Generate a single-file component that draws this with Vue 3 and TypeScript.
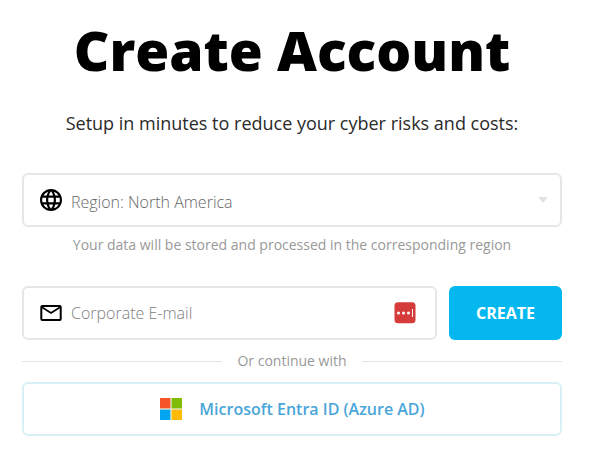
<script setup lang="ts">
import { ref } from 'vue'

const region = ref('North America')
const email = ref('')
</script>

<template>
  <main class="signup">
    <h1 class="title">Create Account</h1>
    <p class="subtitle">Setup in minutes to reduce your cyber risks and costs:</p>

    <div class="field region">
      <svg class="field-icon" viewBox="2 2 20 20" fill="currentColor" aria-hidden="true">
        <path d="M11.99 2C6.47 2 2 6.48 2 12s4.47 10 9.99 10C17.52 22 22 17.52 22 12S17.52 2 11.99 2zm6.93 6h-2.95c-.32-1.25-.78-2.45-1.38-3.56 1.84.63 3.37 1.91 4.33 3.56zM12 4.04c.83 1.2 1.48 2.53 1.91 3.96h-3.82c.43-1.43 1.08-2.76 1.91-3.96zM4.26 14C4.1 13.36 4 12.69 4 12s.1-1.36.26-2h3.38c-.08.66-.14 1.32-.14 2s.06 1.34.14 2H4.26zm.82 2h2.95c.32 1.25.78 2.45 1.38 3.56-1.84-.63-3.37-1.9-4.33-3.56zm2.95-8H5.08c.96-1.66 2.49-2.93 4.33-3.56C8.81 5.55 8.35 6.75 8.03 8zM12 19.96c-.83-1.2-1.48-2.53-1.91-3.96h3.82c-.43 1.43-1.08 2.76-1.91 3.96zM14.34 14H9.66c-.09-.66-.16-1.32-.16-2s.07-1.35.16-2h4.68c.09.65.16 1.32.16 2s-.07 1.34-.16 2zm.25 5.56c.6-1.11 1.06-2.31 1.38-3.56h2.95c-.96 1.65-2.49 2.93-4.33 3.56zM16.36 14c.08-.66.14-1.32.14-2s-.06-1.34-.14-2h3.38c.16.64.26 1.31.26 2s-.1 1.36-.26 2h-3.38z" />
      </svg>
      <span class="region-text">Region: {{ region }}</span>
      <svg class="caret" viewBox="0 0 10 6" aria-hidden="true"><path d="M0 0h10L5 6z" /></svg>
    </div>
    <p class="hint">Your data will be stored and processed in the corresponding region</p>

    <form class="email-row" @submit.prevent>
      <label class="field email">
        <svg class="field-icon mail" viewBox="0 0 22 16" fill="none" stroke="currentColor" stroke-width="2" aria-hidden="true">
          <rect x="1.300" y="1" width="19.400" height="14" rx="1" />
          <path d="M2 2.200 11 8l9-5.800" stroke-width="1.700" />
        </svg>
        <input v-model="email" class="email-input" type="email" placeholder="Corporate E-mail" />
        <svg class="manager" viewBox="0 0 22 22" aria-hidden="true">
          <rect x=".5" y=".2" width="21" height="21" rx="3.500" fill="#d63b3b" />
          <circle cx="4.500" cy="11" r="1.500" fill="#fff" />
          <circle cx="9.500" cy="11" r="1.500" fill="#fff" />
          <circle cx="14.500" cy="11" r="1.500" fill="#fff" />
          <rect x="18" y="7" width="1" height="8" fill="#fff" />
        </svg>
      </label>
      <button class="create" type="submit"><span>CREATE</span></button>
    </form>

    <div class="divider"><span>Or continue with</span></div>

    <button class="microsoft" type="button">
      <svg class="ms-logo" viewBox="0 0 22 22" aria-hidden="true">
        <rect width="22" height="22" fill="#e9efdc" />
        <path fill="#f65326" d="M0 0h10.400v10.400H0z" />
        <path fill="#80bb07" d="M11.600 0H22v10.400H11.600z" />
        <path fill="#04a5f0" d="M0 11.600h10.400V22H0z" />
        <path fill="#ffba08" d="M11.600 11.600H22V22H11.600z" />
      </svg>
      <span>Microsoft Entra ID (Azure AD)</span>
    </button>
  </main>
</template>

<style>
body {
  background: #fff;
}
</style>

<style scoped>
.signup {
  box-sizing: border-box;
  width: 584px;
  height: 461px;
  padding: 13px 22px 0;
  font-family: 'Open Sans', sans-serif;
  color: #000;
}

.title {
  margin: 0;
  font-size: 55px;
  font-weight: 800;
  line-height: 74px;
  text-align: center;
  white-space: nowrap;
}

.subtitle {
  margin: 24px 0 38px;
  font-size: 18px;
  font-weight: 400;
  line-height: 24px;
  text-align: center;
  white-space: nowrap;
  color: #2a2a2a;
}

.field {
  box-sizing: border-box;
  display: flex;
  align-items: center;
  height: 54px;
  padding: 0 16px;
  border: 2px solid #e6e6e6;
  border-radius: 6px;
}

.field-icon {
  flex: none;
  width: 22px;
  height: 22px;
  margin-right: 9px;
}

.mail {
  height: 16px;
}

.region-text {
  flex: 1;
  padding-top: 3px;
  font-size: 16px;
  font-weight: 300;
  line-height: 22px;
  color: #666;
}

.region {
  padding-right: 12px;
}

.caret {
  width: 10px;
  height: 6px;
  fill: #e2e2e2;
}

.hint {
  margin: 8px 0 31px;
  font-size: 14px;
  line-height: 20px;
  text-align: center;
  color: #999;
}

.email-row {
  display: flex;
  gap: 12px;
}

.email {
  flex: 1;
  min-width: 0;
  padding-right: 19px;
}

.email-input {
  flex: 1;
  min-width: 0;
  padding: 0;
  border: 0;
  outline: 0;
  background: none;
  font: 300 16px/22px 'Open Sans', sans-serif;
  color: #555;
}

.email-input::placeholder {
  color: #808080;
  opacity: 1;
}

.manager {
  width: 22px;
  height: 22px;
}

.create {
  width: 113px;
  height: 54px;
  padding: 0;
  border: 0;
  border-radius: 6px;
  background: #04b8ef;
  font: 700 16px/22px 'Open Sans', sans-serif;
  color: #fff;
}

.divider {
  display: flex;
  align-items: center;
  gap: 15px;
  margin: 11px 0;
  font-size: 14px;
  line-height: 20px;
  color: #999;
}

.divider::before,
.divider::after {
  content: '';
  flex: 1;
  height: 1px;
  background: #e4e4e4;
}

.microsoft {
  box-sizing: border-box;
  display: flex;
  align-items: center;
  justify-content: center;
  gap: 17px;
  width: 100%;
  height: 54px;
  padding: 0 0 0 1px;
  border: 2px solid #d7f1f6;
  border-radius: 6px;
  background: #fff;
  font: 600 16px/22px 'Open Sans', sans-serif;
  color: #4aa6d8;
}

.ms-logo {
  width: 22px;
  height: 22px;
}
</style>
